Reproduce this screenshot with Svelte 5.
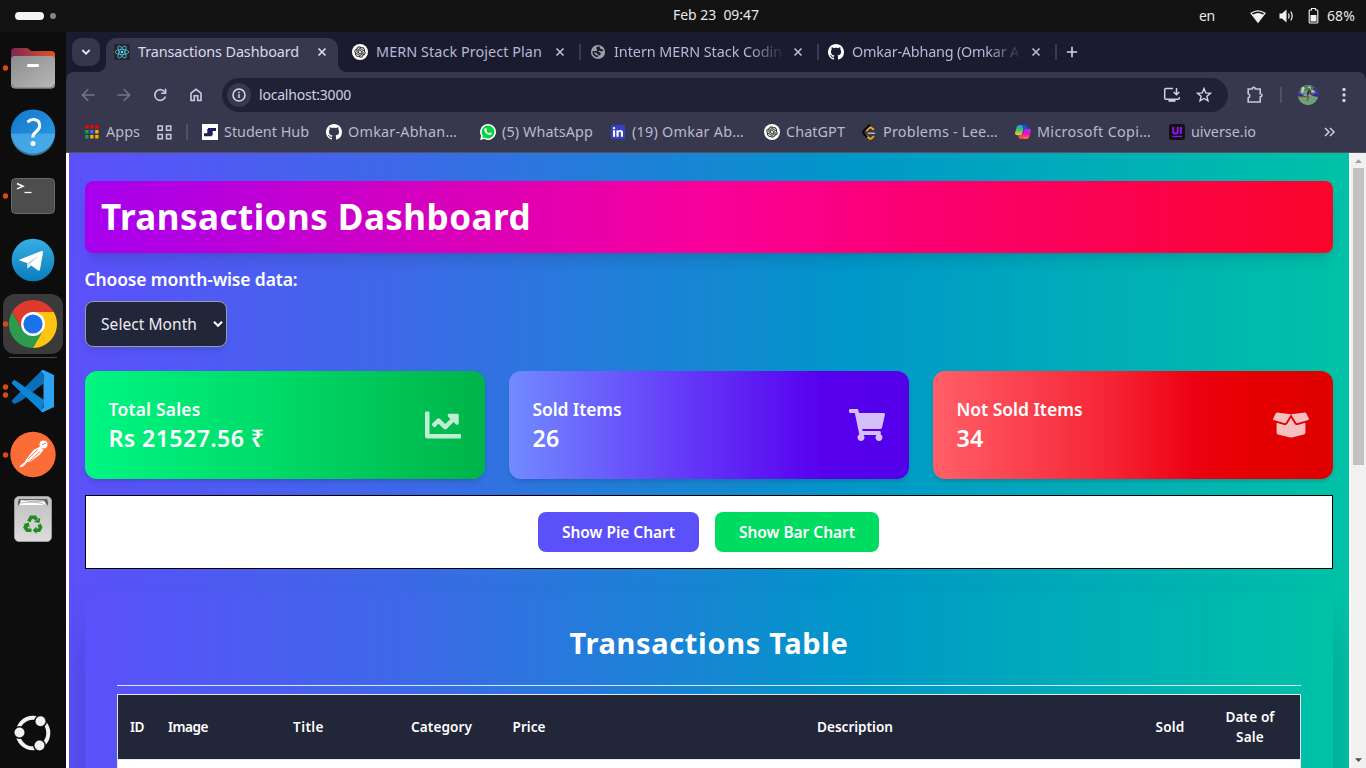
<script>
  // Sets a label to a fixed advance width by spreading the difference over its letters.
  function fit(node, width) {
    const natural = node.getBoundingClientRect().width;
    const count = node.textContent.length;
    node.style.letterSpacing = (width - natural) / count + 'px';
    node.style.width = width + 'px';
  }

  const tabs = [
    { icon: 'react', title: 'Transactions Dashboard', width: 161, active: true },
    { icon: 'gpt', title: 'MERN Stack Project Plan', width: 166 },
    { icon: 'globe', title: 'Intern MERN Stack Codin', width: 168, fade: true, line: true },
    { icon: 'github', title: 'Omkar-Abhang (Omkar A', width: 167, fade: true, line: true }
  ];

  const bookmarks = [
    { icon: 'student', title: 'Student Hub', width: 85, slot: 124 },
    { icon: 'github', title: 'Omkar-Abhan…', width: 109, slot: 154 },
    { icon: 'whatsapp', title: '(5) WhatsApp', width: 91, slot: 130 },
    { icon: 'linkedin', title: '(19) Omkar Ab…', width: 112, slot: 154 },
    { icon: 'gpt', title: 'ChatGPT', width: 59, slot: 97 },
    { icon: 'leetcode', title: 'Problems - Lee…', width: 115, slot: 154 },
    { icon: 'copilot', title: 'Microsoft Copi…', width: 114, slot: 154 },
    { icon: 'uiverse', title: 'uiverse.io', width: 65, slot: 100 }
  ];

  const cards = [
    { tone: 'green', label: 'Total Sales', labelWidth: 92, value: 'Rs 21527.56 ₹', valueWidth: 156, box: '0 0 512 512',
      path: 'M496 384H64V80c0-8.84-7.16-16-16-16H16C7.16 64 0 71.16 0 80v336c0 17.67 14.33 32 32 32h464c8.84 0 16-7.16 16-16v-32c0-8.84-7.16-16-16-16zM464 96H345.94c-21.38 0-32.09 25.85-16.97 40.97l32.4 32.4L288 242.75l-73.37-73.37c-12.5-12.5-32.76-12.5-45.25 0l-68.69 68.69c-6.25 6.25-6.25 16.38 0 22.63l22.62 22.62c6.25 6.25 16.38 6.25 22.63 0L192 237.25l73.37 73.37c12.5 12.5 32.76 12.5 45.25 0l96-96 32.4 32.4c15.12 15.12 40.97 4.41 40.97-16.97V112c.01-8.84-7.15-16-15.99-16z' },
    { tone: 'violet', label: 'Sold Items', labelWidth: 89, value: '26', valueWidth: 27, box: '0 0 576 512',
      path: 'M528.12 301.319l47.273-208C578.806 78.301 567.391 64 551.99 64H159.208l-9.166-44.81C147.758 8.021 137.93 0 126.529 0H24C10.745 0 0 10.745 0 24v16c0 13.255 10.745 24 24 24h69.883l70.248 343.435C147.325 417.1 136 435.222 136 456c0 30.928 25.072 56 56 56s56-25.072 56-56c0-15.674-6.447-29.835-16.824-40h209.647C430.447 426.165 424 440.326 424 456c0 30.928 25.072 56 56 56s56-25.072 56-56c0-22.172-12.888-41.332-31.579-50.405l5.517-24.276c3.413-15.018-8.002-29.319-23.403-29.319H218.117l-6.545-32h293.145c11.206 0 20.92-7.754 23.403-18.681z' },
    { tone: 'red', label: 'Not Sold Items', labelWidth: 126, value: '34', valueWidth: 27, box: '0 0 640 512',
      path: 'M425.7 256c-16.9 0-32.8-9-41.4-23.4L320 126l-64.2 106.6c-8.7 14.5-24.6 23.5-41.5 23.5-4.5 0-9-.6-13.3-1.9L64 215v178c0 14.7 10 27.5 24.2 31l216.2 54.1c10.2 2.5 20.9 2.5 31 0L551.8 424c14.2-3.6 24.2-16.4 24.2-31V215l-137 39.1c-4.3 1.3-8.8 1.9-13.3 1.9zm212.6-112.2L586.8 41c-3.1-6.2-9.8-9.8-16.7-8.9L320 64l91.7 152.1c3.8 6.3 11.4 9.3 18.5 7.3l197.9-56.5c9.9-2.9 14.7-13.9 10.2-23.1zM53.2 41L1.7 143.8c-4.6 9.2.3 20.2 10.1 23l197.9 56.5c7.1 2 14.7-1 18.5-7.3L320 64 69.8 32.1c-6.9-.8-13.5 2.7-16.6 8.9z' }
  ];

  const columns = [
    { lines: [['ID', 14]] },
    { lines: [['Image', 40]] },
    { lines: [['Title', 31]] },
    { lines: [['Category', 61]] },
    { lines: [['Price', 33]] },
    { lines: [['Description', 76]] },
    { lines: [['Sold', 29]] },
    { lines: [['Date of', 49], ['Sale', 28]] }
  ];

  const dots = ['#f00000', '#f00000', '#f00000', '#0da552', '#4268f0', '#f6b400', '#0da552', '#f6b400', '#f6b400'];
</script>

{#snippet label(text, width)}<span class="fit" use:fit={width}>{text}</span>{/snippet}

{#snippet favicon(name)}
  {#if name === 'react'}
    <svg width="16" height="16" viewBox="0 0 16 16"><rect width="16" height="16" rx="1.5" fill="#23272b" /><g fill="none" stroke="#53c1de" stroke-width=".8"><ellipse cx="8" cy="8" rx="6.8" ry="2.6" /><ellipse cx="8" cy="8" rx="6.8" ry="2.6" transform="rotate(60 8 8)" /><ellipse cx="8" cy="8" rx="6.8" ry="2.6" transform="rotate(120 8 8)" /></g><circle cx="8" cy="8" r="1.3" fill="#61dafb" /></svg>
  {:else if name === 'gpt'}
    <svg width="16" height="16" viewBox="0 0 16 16"><circle cx="8" cy="8" r="8" fill="#fff" /><path transform="translate(2.5 2.5) scale(.458)" fill="#111" stroke="#111" stroke-width=".4" d="M22.2819 9.8211a5.9847 5.9847 0 0 0-.5157-4.9108 6.0462 6.0462 0 0 0-6.5098-2.9A6.0651 6.0651 0 0 0 4.9807 4.1818a5.9847 5.9847 0 0 0-3.9977 2.9 6.0462 6.0462 0 0 0 .7427 7.0966 5.98 5.98 0 0 0 .511 4.9107 6.051 6.051 0 0 0 6.5146 2.9001A5.9847 5.9847 0 0 0 13.2599 24a6.0557 6.0557 0 0 0 5.7718-4.2058 5.9894 5.9894 0 0 0 3.9977-2.9001 6.0557 6.0557 0 0 0-.7475-7.0729zm-9.022 12.6081a4.4755 4.4755 0 0 1-2.8764-1.0408l.1419-.0804 4.7783-2.7582a.7948.7948 0 0 0 .3927-.6813v-6.7369l2.02 1.1686a.071.071 0 0 1 .038.052v5.5826a4.504 4.504 0 0 1-4.4945 4.4944zm-9.6607-4.1254a4.4708 4.4708 0 0 1-.5346-3.0137l.142.0852 4.783 2.7582a.7712.7712 0 0 0 .7806 0l5.8428-3.3685v2.3324a.0804.0804 0 0 1-.0332.0615L9.74 19.9502a4.4992 4.4992 0 0 1-6.1408-1.6464zM2.3408 7.8956a4.485 4.485 0 0 1 2.3655-1.9728V11.6a.7664.7664 0 0 0 .3879.6765l5.8144 3.3543-2.0201 1.1685a.0757.0757 0 0 1-.071 0l-4.8303-2.7865A4.504 4.504 0 0 1 2.3408 7.872zm16.5963 3.8558L13.1038 8.364 15.1192 7.2a.0757.0757 0 0 1 .071 0l4.8303 2.7913a4.4944 4.4944 0 0 1-.6765 8.1042v-5.6772a.79.79 0 0 0-.407-.667zm2.0107-3.0231l-.142-.0852-4.7735-2.7818a.7759.7759 0 0 0-.7854 0L9.409 9.2297V6.8974a.0662.0662 0 0 1 .0284-.0615l4.8303-2.7866a4.4992 4.4992 0 0 1 6.6802 4.66zM8.3065 12.863l-2.02-1.1638a.0804.0804 0 0 1-.038-.0567V6.0742a4.4992 4.4992 0 0 1 7.3757-3.4537l-.142.0805L8.704 5.459a.7948.7948 0 0 0-.3927.6813zm1.0976-2.3654l2.602-1.4998 2.6069 1.4998v2.9994l-2.5974 1.4997-2.6067-1.4997Z" /></svg>
  {:else if name === 'globe'}
    <svg width="16" height="16" viewBox="0 0 16 16"><circle cx="8" cy="8" r="7.1" fill="#9c9ea6" /><path fill="#1a1b2e" d="M9.800 2.600C7.600 2.400 6.300 3 6.300 4.200c0 1 1 1.100 1 1.900 0 .6-.7.900-1.600 1L2.600 7.300c-.3 2 .3 3.200 1.400 4.200 1.100 1 2.300 1.600 4 1.700V11.600c1.400.2 2.400-.3 2.700-1.300.2-.9-.2-1.700-1.200-2l-1.200-.3c.1-1 .7-1.300 1.700-1.100 1.200.3 2.300.4 3.300.1-.3-1-1-1.600-2-1.900-1.300-.3-1.900-1.300-1.500-2.500zM4 8.600l2.600.2c.5 1 .4 1.500 1.600 1.700.9.100.8 1-.2 1.100C6 11.500 4.600 10.600 4 8.600z" /></svg>
  {:else if name === 'github'}
    <svg width="16" height="16" viewBox="0 0 16 16"><path fill="#fff" d="M8 0C3.580 0 0 3.580 0 8c0 3.540 2.290 6.530 5.470 7.590.4.070.55-.17.55-.38 0-.19-.01-.82-.01-1.490-2.010.37-2.530-.49-2.690-.94-.09-.23-.48-.94-.82-1.130-.28-.15-.68-.52-.01-.53.630-.01 1.080.58 1.230.82.720 1.210 1.870.87 2.330.66.070-.52.280-.87.510-1.070-1.780-.2-3.640-.89-3.640-3.950 0-.87.310-1.590.82-2.150-.08-.2-.36-1.020.08-2.120 0 0 .67-.21 2.200.82.640-.18 1.320-.27 2-.27s1.360.09 2 .27c1.530-1.040 2.200-.82 2.200-.82.440 1.100.160 1.920.080 2.120.510.56.820 1.270.820 2.150 0 3.070-1.870 3.750-3.650 3.950.290.25.540.73.540 1.480 0 1.070-.01 1.930-.01 2.200 0 .21.150.46.550.38A8.013 8.013 0 0 0 16 8c0-4.420-3.580-8-8-8z" /></svg>
  {:else if name === 'student'}
    <svg width="16" height="16" viewBox="0 0 16 16"><rect width="16" height="16" fill="#fff" /><path fill="#241b5e" d="M6 4h8v3h-3.300v4.300H9.800v1H2v-3h3.300V5H6z" /></svg>
  {:else if name === 'whatsapp'}
    <svg width="16" height="16" viewBox="0 0 16 16"><path fill="#fff" d="M8 0a8 8 0 1 1-3.700 15.100L.1 16l1-4A8 8 0 0 1 8 0z" /><path fill="#04d33f" d="M8 1.400a6.500 6.500 0 1 1-3.400 12.100l-2.400.5.7-2.300A6.500 6.500 0 0 1 8 1.400z" /><path fill="#fff" d="M5.300 4.300c.3-.3.800-.3 1 .1l.6 1.300c.1.300 0 .5-.5 1.200.6 1.100 1.400 1.800 2.600 2.300.6-.8.800-1 1.100-.9l1.400.7c.3.200.3.400.2.800-.4 1.200-1.500 1.600-2.700 1.200-2.300-.8-3.500-2-4.400-3.800-.4-1-.2-2.200.7-2.900z" /></svg>
  {:else if name === 'linkedin'}
    <svg width="16" height="16" viewBox="0 0 16 16"><rect x="1" y="1" width="14" height="14" rx="1" fill="#3441c4" /><g fill="#fff"><rect x="3" y="6.200" width="2.100" height="6.600" /><circle cx="4" cy="4.100" r="1.200" /><path d="M6.500 6.200h2v.9c.4-.7 1.200-1.100 2-1.100 1.900 0 2.500 1.200 2.500 3v3.800h-2.100V9.400c0-.9-.2-1.600-1.100-1.600-.9 0-1.200.7-1.200 1.600v3.400H6.500z" /></g></svg>
  {:else if name === 'leetcode'}
    <svg width="16" height="16" viewBox="0 0 16 16"><path d="M5.500 6.500 8 4.100c.8-.8 2-.8 2.900 0l1.300 1.200M5.500 11.600 7.800 14c.9.800 2.200.8 3.100 0l1.500-1.400" fill="none" stroke="#f7a51d" stroke-width="1.900" stroke-linecap="round" /><path d="M8.800.8 2.900 6.700c-.9.9-.9 2.200 0 3.100l3.300 3.400" fill="none" stroke="#080808" stroke-width="2" /><path d="M7.200 9.300h6.300" stroke="#b5b5b5" stroke-width="1.500" stroke-linecap="round" /></svg>
  {:else if name === 'copilot'}
    <svg width="16" height="16" viewBox="0 0 16 16"><defs><linearGradient id="cpa" x1="0" y1="0" x2="0" y2="1"><stop offset="0" stop-color="#16a0f0" /><stop offset=".45" stop-color="#3bbf73" /><stop offset="1" stop-color="#ffc928" /></linearGradient><linearGradient id="cpb" x1="0" y1="0" x2="0" y2="1"><stop offset="0" stop-color="#a32ff2" /><stop offset=".5" stop-color="#f00bc3" /><stop offset="1" stop-color="#ff7a37" /></linearGradient></defs><path fill="url(#cpa)" d="M4.500 1h5L7.300 9.200c-.4 1.400-1.100 2-2.300 2H2C.4 11.200-.3 10 .2 8.200L1.600 3.500C2.100 1.800 3 1 4.500 1z" /><path fill="url(#cpb)" d="M11.500 15H6.300l2.400-8.300c.4-1.300 1.200-1.900 2.300-1.900h3c1.600 0 2.300 1.200 1.800 3l-1.400 4.700c-.5 1.700-1.400 2.500-2.900 2.500z" /><path fill="#1b50d7" d="M7 1h3.600c.9 0 1.400.6 1.700 1.500l.7 2.300h-2c-1.200 0-1.800.7-2.200 1.900z" /><path fill="#ef4c4f" d="M9 15H5.400c-.9 0-1.400-.6-1.700-1.500L3 11.200h2c1.100 0 1.800-.6 2.200-1.900z" /></svg>
  {:else if name === 'uiverse'}
    <svg width="16" height="16" viewBox="0 0 16 16"><rect width="16" height="16" rx="2" fill="#111116" /><path d="M4.200 3v4.800c0 2.400 4.600 2.400 4.600 0V3M11.900 3v7" fill="none" stroke="#8b16f2" stroke-width="2" /><path d="M3.200 12.400h9.800" stroke="#8b16f2" stroke-width="1.300" /></svg>
  {/if}
{/snippet}

<div class="desktop">
  <header class="topbar">
    <svg class="spaces" width="60" height="32" viewBox="0 0 60 32"><rect x="15" y="12" width="29" height="8" rx="4" fill="#f4f4f4" /><circle cx="53" cy="16" r="3" fill="#858585" /></svg>
    <div class="clock">{@render label('Feb 23  09:47', 86)}</div>
    <div class="status">
      {@render label('en', 16)}
      <svg width="78" height="32" viewBox="0 0 78 32">
        <path d="M8 13.200Q15 8.400 22 13.200L15 22.300z" fill="none" stroke="#f2f2f2" stroke-width="1.300" /><path d="M9.600 14.800q5.400-3.400 10.800 0L15 22z" fill="#f2f2f2" />
        <path d="M36.500 13.500h2.500l4.500-4v13l-4.500-4h-2.500z" fill="#f2f2f2" /><path d="M45.500 13.500q1.300 2.500 0 5M47.800 11.500q2.700 4.500 0 9" fill="none" stroke="#f2f2f2" stroke-width="1.200" />
        <path d="M67 10h1.500V8.500h4V10H74q.8 0 .8.800v11.400q0 .8-.8.800h-7q-.8 0-.8-.8V10.800q0-.8.8-.8z" fill="none" stroke="#f2f2f2" stroke-width="1.100" /><rect x="67.500" y="15" width="6" height="6.500" fill="#f2f2f2" />
      </svg>
      {@render label('68%', 28)}
    </div>
  </header>

  <div class="body">
    <nav class="dock">
      <svg width="66" height="64" viewBox="0 0 66 64">
        <defs><linearGradient id="fa" x1="0" x2="1"><stop offset="0" stop-color="#7a2757" /><stop offset="1" stop-color="#e65320" /></linearGradient><linearGradient id="fb" x1="0" y1="0" x2="1" y2="1"><stop offset="0" stop-color="#8c8c8c" /><stop offset="1" stop-color="#b9b9b9" /></linearGradient></defs>
        <circle cx="5.500" cy="32" r="2.700" fill="#dd4814" />
        <path d="M11 24v-8q0-4 4-4h11q2 0 3 1l2 2h20q4 0 4 4v6z" fill="url(#fa)" /><rect x="11" y="20" width="44" height="32.500" rx="4" fill="url(#fb)" /><path d="M12 48q1 4 4 4h34q4 0 4.500-4" fill="none" stroke="#777" /><rect x="27" y="28" width="12" height="3" rx="1.200" fill="#fff" />
      </svg>
      <svg width="66" height="64" viewBox="0 0.4 66 64">
        <defs><linearGradient id="ha" x1="0" y1="0" x2="1" y2="1"><stop offset="0" stop-color="#1577cd" /><stop offset="1" stop-color="#2b9de3" /></linearGradient></defs>
        <circle cx="33" cy="32" r="22.200" fill="url(#ha)" /><path d="M10.800 34h44.400a22.200 22.200 0 0 1-44.400 0z" fill="#5ab8ee" opacity=".6" />
        <path d="M27.500 22.500q3-2.800 6.500-2.500 5.700.5 5.700 6 0 3.500-4 6.400-2.900 2.200-2.900 5.600" fill="none" stroke="#fff" stroke-width="3" /><circle cx="33" cy="44" r="2.500" fill="#fff" />
      </svg>
      <svg width="66" height="64" viewBox="0 0 66 64">
        <circle cx="5.500" cy="32" r="2.700" fill="#dd4814" /><rect x="11.500" y="14.500" width="43" height="35" rx="4" fill="#4d4d4d" stroke="#686868" /><path d="m17 19.500 6 2.700-6 2.700" fill="none" stroke="#fff" stroke-width="1.500" /><path d="M24.500 28.500h7" stroke="#fff" stroke-width="1.300" />
      </svg>
      <svg width="66" height="64" viewBox="0 0 66 64">
        <defs><linearGradient id="tg" x1="0" y1="0" x2="0" y2="1"><stop offset="0" stop-color="#36aee2" /><stop offset="1" stop-color="#0a7dbd" /></linearGradient></defs>
        <circle cx="33" cy="32" r="21.300" fill="url(#tg)" /><path d="M19.800 31.500 41.500 23q1.700-.5 1.500 1.500l-3 17q-.5 1.800-2.200.8L31 37.500l-3.200 3-.8-5.500-6.500-2.200q-1.800-.6-.7-1.300z" fill="#fff" /><path d="m27 35 12.500-8L30 36l-2.200 4.500z" fill="#c5dceb" />
      </svg>
      <svg width="66" height="64" viewBox="0 0 66 64">
        <rect x="3" y="2" width="60" height="60" rx="12" fill="#3a3a3a" /><circle cx="5.500" cy="32" r="2.700" fill="#dd4814" />
        <path d="M33 32 12.220 20a24 24 0 0 1 41.560 0z" fill="#e03a30" /><path d="M12.220 20a24 24 0 0 0 20.780 36l10.400-18H22.600z" fill="#2b9b4d" /><path d="M53.780 20a24 24 0 0 1-20.780 36l10.400-18V20z" fill="#fdc50f" /><path d="M33 20h20.780L43.400 38z" fill="#fdc50f" /><path d="M12.220 20 22.600 38l4-12L33 20z" fill="#e03a30" />
        <circle cx="33" cy="32" r="12" fill="#fff" /><circle cx="33" cy="32" r="9.600" fill="#1a73e8" />
      </svg>
      <div class="dock-line"></div>
      <svg width="66" height="64" viewBox="0 0 66 64">
        <circle cx="5.500" cy="28" r="2.700" fill="#dd4814" /><circle cx="5.500" cy="36" r="2.700" fill="#dd4814" />
        <path d="m44 24-22 17.200-6.500 3.300q-1 .6-2 0l-1.300-1.400q-.9-1 0-2L42 11z" fill="#0a6fb8" /><path d="M42 53 12.200 25q-.9-1 0-2l1.300-1.600q1-.8 2 0L44 41z" fill="#0d85d6" /><path d="M43.500 11 54 16v32l-10.500 5q-1.300.5-2.500-1l2.500-3.500v-33L41 12q1.200-1.500 2.500-1z" fill="#2aa3f3" />
      </svg>
      <svg width="66" height="64" viewBox="0 0 66 64">
        <circle cx="5.500" cy="32" r="2.700" fill="#dd4814" /><circle cx="33" cy="31.500" r="22.700" fill="#fb6c37" />
        <circle cx="43.500" cy="21.500" r="4" fill="#fff" /><path d="m40 23.500 3.500 3.500-4 5-9 6.500-3 .3-4 4.500-4 1.200 1-2.200 3.500-2.600 4-5.700 5.500-7z" fill="#fff" /><path d="m28 36 10-9.500M30 38l10-9.500M42 22l4-2" stroke="#fb6c37" stroke-width=".9" />
      </svg>
      <svg width="66" height="64" viewBox="0 0 66 64">
        <defs><linearGradient id="tr" x1="0" y1="0" x2="0" y2="1"><stop offset="0" stop-color="#bfbfbf" /><stop offset="1" stop-color="#dcdcdc" /></linearGradient></defs>
        <rect x="14.500" y="9.500" width="37" height="45" rx="4.500" fill="url(#tr)" stroke="#aaa" stroke-width=".8" /><path d="M19 12h28q2 4 .5 6.500h-29Q17 16 19 12z" fill="#606060" /><path d="m19 18.500 2-5.500 23 .5 3 5z" fill="#fff" /><path d="m22 13 20 3.500 4 2M20 16l25-2" fill="none" stroke="#999" stroke-width=".7" />
        <g fill="none" stroke="#228b22" stroke-width="3.600"><path d="m28.700 34.500 2.300-4.200h4l1.500 2.500" /><path d="m39 37.500 1.600 2.800-1.600 3h-3" /><path d="M31.500 43.300h-4.300l-2-3 1.300-2.500" /></g><g fill="#228b22"><path d="m34 35 5.500 1 .8-5.500z" /><path d="m36.500 39.500-3.800 3.800 3.800 3.800z" /><path d="m23.500 37 5.300-1.500.8 5z" /></g>
      </svg>
      <svg class="start" width="66" height="64" viewBox="0 0 66 64">
        <circle cx="33" cy="32" r="15.300" fill="none" stroke="#f2f2f2" stroke-width="4" /><g fill="#0d0d0d"><circle cx="19.500" cy="31.500" r="6.500" /><circle cx="40.500" cy="20.300" r="6.500" /><circle cx="39.500" cy="44.500" r="6.500" /></g><g fill="#f2f2f2"><circle cx="19.500" cy="31.500" r="5" /><circle cx="40.500" cy="20.300" r="5" /><circle cx="39.500" cy="44.500" r="5" /></g>
      </svg>
    </nav>

    <main class="browser">
      <div class="tabs">
        <div class="tabsearch"><svg width="10" height="8" viewBox="0 0 10 8"><path d="m1.300 2 3.700 3.700L8.700 2" fill="none" stroke="#e1e1ee" stroke-width="1.900" /></svg></div>
        {#each tabs as tab}
          <div class="tab" class:active={tab.active} class:line={tab.line}>
            {@render favicon(tab.icon)}
            <div class="tabtitle" class:fade={tab.fade}>{@render label(tab.title, tab.width)}</div>
            <svg width="16" height="16" viewBox="0 0 16 16"><path d="m4.500 4.500 7 7m0-7-7 7" stroke="currentColor" stroke-width="1.700" /></svg>
          </div>
        {/each}
        <div class="newtab"><svg width="16" height="16" viewBox="0 0 16 16"><path d="M8 2.800v10.400M2.800 8h10.400" stroke="#d3d4ef" stroke-width="1.600" /></svg></div>
      </div>

      <div class="chrome">
        <div class="toolbar">
          <svg class="dim" width="36" height="40" viewBox="0 0 36 40"><path d="M24.500 23h-12m5.700-5.800L12.400 23l5.800 5.800" /></svg>
          <svg class="dim" width="36" height="40" viewBox="0 0 36 40"><path d="M11.500 23h12m-5.700-5.800 5.800 5.800-5.800 5.800" /></svg>
          <svg width="36" height="40" viewBox="0 0 36 40"><path d="M23 20.500a5.400 5.400 0 1 0 .4 4" /><path d="M23.600 16.800v4.400h-4.400" /></svg>
          <svg width="36" height="40" viewBox="0 0 36 40"><path d="M13 28.500v-7.300l5-3.900 5 3.900v7.300h-3.300v-4.700h-3.400v4.700z" /></svg>
          <div class="omnibox">
            <div class="info"><svg width="16" height="16" viewBox="0 0 16 16"><circle cx="8" cy="8" r="6" fill="none" stroke="#dcdde9" stroke-width="1.500" /><path d="M8 7.300v3.600M8 4.800v1.500" stroke="#dcdde9" stroke-width="1.500" /></svg></div>
            <span class="url">{@render label('localhost:3000', 92)}</span>
            <svg class="install" width="18" height="18" viewBox="0 0 18 18"><path d="M10 2.500H3Q1.700 2.500 1.700 3.800V12q0 1.300 1.300 1.300h12q1.300 0 1.300-1.300v-1M13.500 2v6.500M10.700 6l2.800 2.800L16.300 6" fill="none" stroke="#cfd0e2" stroke-width="1.500" /><path d="M5.500 13.500h7v2.300h-7z" fill="#cfd0e2" /></svg>
            <svg width="18" height="18" viewBox="0 0 18 18"><path d="m9 2.600 1.800 4.300 4.700.4-3.600 3 1.100 4.600L9 12.500l-4 2.400 1.100-4.600-3.600-3 4.700-.4z" fill="none" stroke="#d5d6e5" stroke-width="1.400" /></svg>
          </div>
          <div class="tools">
            <svg width="20" height="20" viewBox="0 0 20 20"><path d="M3.200 4h3.900q.2-1.600 1.600-1.600T10.300 4h4.900v4.700q1.800.2 1.800 1.600t-1.800 1.600V17H3.200v-4.300q1.600-.3 1.600-2t-1.600-2z" fill="none" stroke="#c5c6e0" stroke-width="1.600" /></svg>
            <i class="vline"></i>
            <svg width="20" height="20" viewBox="0 0 20 20"><defs><clipPath id="av"><circle cx="10" cy="10" r="10" /></clipPath></defs><g clip-path="url(#av)"><rect width="20" height="20" fill="#81a2cc" /><path d="M0 4h6l-3 3 3 4H0zM14 1l6 3v8h-5l-2-5z" fill="#381bbd" /><path d="m3 3 6-3 7 2-1 3 4 3-6 2-4-2-5 2-3-2z" fill="#557b56" /><path d="m4 1 4 3 4-3 1 4 5 1-5 2-4-1-6 1z" fill="#c3d8b0" /><path d="m7 3 5 0 2 4-4-1-5 1z" fill="#55804f" /><path d="M9.500 6 8 14h2l1-7 4 5-3-7z" fill="#3e2639" /><path d="M0 12q10-3 20 0v8H0z" fill="#6fa272" /><path d="M0 12q5-1 11 0l-2 4" fill="none" stroke="#683c35" /></g></svg>
            <svg width="20" height="20" viewBox="0 0 20 20"><g fill="#d0d1e2"><circle cx="10" cy="4.500" r="1.700" /><circle cx="10" cy="10" r="1.700" /><circle cx="10" cy="15.500" r="1.700" /></g></svg>
          </div>
        </div>

        <div class="bookmarks">
          <svg class="apps" width="14" height="14" viewBox="0 0 14 14">{#each dots as c, i}<rect x={(i % 3) * 5 + .2} y={Math.floor(i / 3) * 5} width="3.300" height="3.500" fill={c} />{/each}</svg>
          <span class="appslabel">{@render label('Apps', 34)}</span>
          <svg class="gridicon" width="15" height="15" viewBox="0 0 15 15"><g fill="none" stroke="#c9c9dc" stroke-width="1.500"><rect x="1" y="1" width="4.300" height="4.300" /><rect x="9.500" y="1" width="4.300" height="4.300" /><rect x="1" y="9.500" width="4.300" height="4.300" /><rect x="9.500" y="9.500" width="4.300" height="4.300" /></g></svg>
          <i class="vline"></i>
          {#each bookmarks as mark}
            <div class="mark" style="width: {mark.slot}px">{@render favicon(mark.icon)}{@render label(mark.title, mark.width)}</div>
          {/each}
          <svg class="more" width="14" height="14" viewBox="0 0 14 14"><path d="m2 3 4 4-4 4m5-8 4 4-4 4" fill="none" stroke="#cdcee2" stroke-width="1.500" /></svg>
        </div>
      </div>

      <div class="viewport">
        <div class="page">
          <h1>{@render label('Transactions Dashboard', 430)}</h1>
          <div class="choose">{@render label('Choose month-wise data:', 213)}</div>
          <div class="select">{@render label('Select Month', 96)}<svg width="10" height="8" viewBox="0 0 10 8"><path d="m1 1.800 4 4 4-4" fill="none" stroke="#fff" stroke-width="2" /></svg></div>
          <div class="cards">
            {#each cards as card}
              <div class="card {card.tone}">
                <div class="cardtext">
                  <div class="cardlabel">{@render label(card.label, card.labelWidth)}</div>
                  <div class="cardvalue">{@render label(card.value, card.valueWidth)}</div>
                </div>
                <svg width="36" height="36" viewBox={card.box}><path d={card.path} fill="#fff" /></svg>
              </div>
            {/each}
          </div>
          <div class="charts">
            <button class="pie">{@render label('Show Pie Chart', 113)}</button>
            <button class="bar">{@render label('Show Bar Chart', 116)}</button>
          </div>
          <section>
            <h2>{@render label('Transactions Table', 279)}</h2>
            <div class="table">
              <div class="thead">
                {#each columns as col}
                  <div>{#each col.lines as line}<div class="headline">{@render label(line[0], line[1])}</div>{/each}</div>
                {/each}
              </div>
              <div class="trow"></div>
            </div>
          </section>
        </div>
        <div class="scrollbar">
          <svg width="15" height="15" viewBox="0 0 15 15"><path d="M4 10 7.500 6.200 11 10z" fill="#a0a0a0" /></svg>
          <div class="thumb"></div>
          <svg class="down" width="15" height="15" viewBox="0 0 15 15"><path d="M4 5.200 7.500 9 11 5.200z" fill="#4c4c4c" /></svg>
        </div>
      </div>
    </main>
  </div>
</div>

<style>
  :global(body) { overflow: hidden; background: #131313; }
  .desktop { width: 1366px; height: 768px; overflow: hidden; display: flex; flex-direction: column; font-family: "Noto Sans", "Open Sans", sans-serif; }
  .desktop :global(svg) { display: block; flex: none; }
  .fit { display: inline-block; white-space: pre; }
  .topbar { height: 32px; flex: none; display: flex; background: #131313; color: #e8e8e8; font-size: 14px; line-height: 30px; }
  .clock { margin-left: 613px; width: 86px; }
  .status { display: flex; margin-left: 440px; width: 167px; line-height: 32px; }
  .status svg { margin: 0 6px 0 28px; }
  .body { display: flex; flex: 1; min-height: 0; }
  .dock { width: 66px; flex: none; display: flex; flex-direction: column; padding: 4px 0 3px; box-sizing: border-box; background: #0d0d0d; }
  .dock-line { height: 1px; margin: 1px 9px; background: #4b4b4b; flex: none; }
  .start { margin-top: auto; }
  .browser { width: 1300px; display: flex; flex-direction: column; background: #1a1b2e; }
  .tabs { display: flex; height: 40px; flex: none; padding-left: 6px; align-items: flex-end; box-sizing: border-box; color: #b6b8d8; font-size: 14.400px; }
  .tabsearch { width: 28px; height: 28px; margin: 0 3px 6px 0; border-radius: 9px; background: #35364c; display: grid; place-items: center; }
  .tab { position: relative; width: 238px; height: 34px; box-sizing: border-box; padding: 0 11px 6px; display: flex; align-items: center; }
  .tab.active { color: #d9dae8; }
  .tab.active::before { content: ''; position: absolute; inset: 0 3px; z-index: 0; background: #37384e; border-radius: 10px 10px 0 0; }
  .tab.active::after { content: ''; position: absolute; left: -5px; right: -5px; bottom: 0; height: 8px; background: radial-gradient(circle at 0 0, transparent 7.500px, #37384e 8px) 0 0 / 8px 8px no-repeat, radial-gradient(circle at 100% 0, transparent 7.500px, #37384e 8px) 100% 0 / 8px 8px no-repeat; }
  .tab > :global(*) { position: relative; z-index: 1; }
  .tab.line { background: linear-gradient(#3a3b52, #3a3b52) 0 6px / 2px 16px no-repeat; }
  .tabtitle { width: 168px; margin: 0 8px; overflow: hidden; line-height: 24px; white-space: nowrap; flex: none; }
  .tabtitle.fade { -webkit-mask-image: linear-gradient(90deg, #000 80%, transparent 102%); mask-image: linear-gradient(90deg, #000 80%, transparent 102%); }
  .newtab { height: 34px; padding: 6px 0 0 9px; box-sizing: border-box; background: linear-gradient(#3a3b52, #3a3b52) 0 6px / 2px 16px no-repeat; }
  .chrome { height: 81px; flex: none; box-sizing: border-box; border-bottom: 1px solid #55535a; background: #37384e; border-radius: 8px 8px 0 0; color: #b9bacb; }
  .toolbar { display: flex; height: 40px; padding-left: 4px; }
  .toolbar > svg { fill: none; stroke: #c9caea; stroke-width: 1.600; }
  .toolbar > svg.dim { stroke: #747588; }
  .omnibox { width: 1006px; height: 34px; margin: 6px 0 0 8px; padding: 0 15px 0 5px; box-sizing: border-box; display: flex; align-items: center; background: #202136; border-radius: 17px; flex: none; }
  .info { width: 24px; height: 24px; border-radius: 50%; display: grid; place-items: center; background: #37384e; }
  .url { margin-left: 8px; font-size: 14px; line-height: 32px; color: #ced0e0; }
  .install { margin: 0 14px 0 auto; }
  .tools { display: flex; align-items: center; height: 34px; margin: 6px 0 0 17px; }
  .vline { width: 2px; height: 16px; background: #505169; flex: none; }
  .tools .vline { margin: 0 16px 0 15px; }
  .tools svg:last-child { margin-left: 16px; }
  .bookmarks { display: flex; align-items: center; height: 40px; padding-left: 19px; box-sizing: border-box; font-size: 14.400px; line-height: 38px; }
  .appslabel { margin-left: 7px; width: 34px; }
  .gridicon { margin: 0 14px 0 17px; }
  .bookmarks .vline { margin-right: 14px; margin-left: 0; }
  .mark { display: flex; align-items: center; gap: 6px; flex: none; }
  .more { margin-left: auto; margin-right: 29px; }
  .viewport { height: 615px; display: flex; padding-left: 3px; background: #fff; overflow: hidden; }
  .page { width: 1280px; height: 615px; overflow: hidden; padding: 28px 16px 0; box-sizing: border-box; color: #fff; background: linear-gradient(90deg, #5c50fb, #3d69e8 26%, #1587d2 50%, #0097c9 61%, #00adb8 80%, #00c2a7); }
  h1 { margin: 0; height: 72px; padding: 16px; box-sizing: border-box; border-radius: 8px; font-size: 35px; line-height: 40px; font-weight: 700; background: linear-gradient(90deg, #a600ee, #d600bd 28%, #f9009a 50%, #fa0072 67%, #fa052a); box-shadow: 0 10px 15px -3px #0000001a, 0 4px 6px -4px #0000001a; }
  .choose { margin-top: 12px; margin-left: -.5px; height: 28px; line-height: 29px; font-size: 17.500px; font-weight: 600; }
  .select { margin-top: 8px; width: 142px; height: 46px; padding: 0 3px 0 15px; box-sizing: border-box; border: 1px solid #9b9faa; border-radius: 8px; background: #222639; box-shadow: 0 4px 6px -1px #0000001a; display: flex; align-items: center; justify-content: space-between; font-size: 15.500px; line-height: 42px; color: #ededf2; }
  .cards { margin-top: 24px; display: grid; grid-template-columns: repeat(3, 400px); gap: 24px; }
  .card { height: 108px; box-sizing: border-box; padding: 24px; border-radius: 12px; display: flex; align-items: center; justify-content: space-between; box-shadow: 0 4px 6px -1px #0000001a, 0 2px 4px -2px #0000001a; }
  .card svg { opacity: .75; }
  .cardtext { margin-left: -.5px; }
  .green { background: linear-gradient(90deg, #00f682, #00d866 50%, #00b349); }
  .violet { background: linear-gradient(90deg, #718bff, #6540f8 40%, #5800ee 78%, #5300e9); }
  .red { background: linear-gradient(90deg, #ff5f69, #f52334 45%, #ec0012 66%, #e50000 80%, #df0000); }
  .cardlabel { font-size: 17.500px; line-height: 28px; font-weight: 600; }
  .cardvalue { font-size: 23.200px; line-height: 30px; height: 32px; font-weight: 600; }
  .charts { margin-top: 16px; height: 74px; box-sizing: border-box; border: 1px solid #000; background: #fff; display: flex; justify-content: center; align-items: center; gap: 16px; padding-right: 1px; }
  button { height: 40px; padding: 0; border: 0; border-radius: 8px; color: #fff; font: 600 15.500px/40px "Noto Sans", sans-serif; }
  .pie { width: 161px; background: #5c50fb; }
  .bar { width: 164px; background: #00db61; }
  section { margin-top: 24px; height: 700px; padding: 32px 32px 0; box-sizing: border-box; background: linear-gradient(90deg, #5c50fb, #3d69e8 26%, #1587d2 50%, #0097c9 61%, #00adb8 80%, #00c2a7); border-radius: 12px; box-shadow: 0 25px 50px -12px #00000040; }
  h2 { margin: 0; height: 61px; box-sizing: border-box; border-bottom: 1px solid #d8e9f6; text-align: center; font-size: 29px; line-height: 36px; font-weight: 700; }
  .table { margin-top: 8px; border: 1px solid #e5e7eb; border-bottom: 0; }
  .thead { height: 64px; display: grid; grid-template-columns: 38px 64px 177px 89px 86px 566px 64px 96px; align-items: center; text-align: center; background: #222639; font-size: 13.600px; line-height: 20px; font-weight: 600; }
  .headline { white-space: nowrap; height: 20px; }
  .trow { height: 80px; border-top: 1px solid #e5e7eb; background: #fff; }
  .scrollbar { width: 15px; margin-left: 2px; background: #f1f1f1; display: flex; flex-direction: column; }
  .thumb { width: 11px; height: 297px; margin-left: 2px; background: #c1c1c1; }
  .down { margin-top: auto; }
</style>
